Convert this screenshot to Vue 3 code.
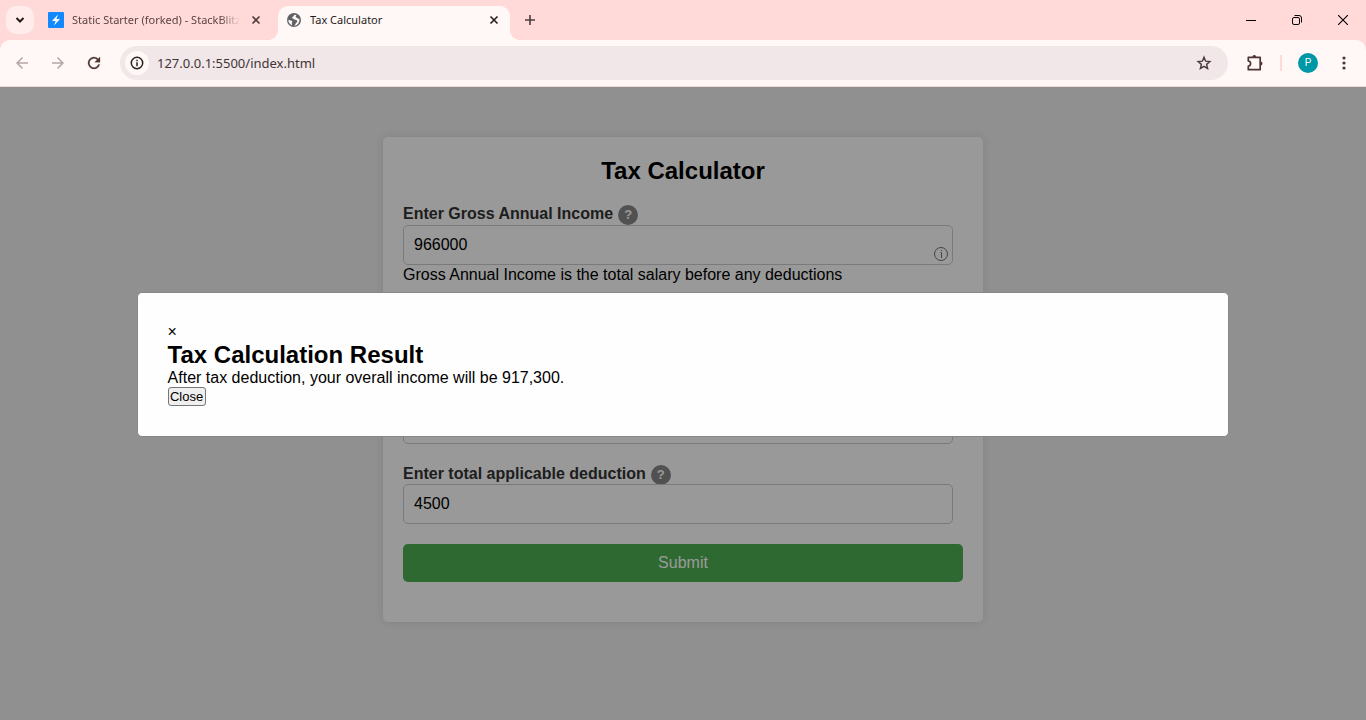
<script setup>
import { ref } from 'vue'

const fields = ref([
  { id: 'gross', label: 'Enter Gross Annual Income', value: '966000', info: true, note: 'Gross Annual Income is the total salary before any deductions' },
  { id: 'second', label: '', value: '' },
  { id: 'third', label: '', value: '' },
  { id: 'deduction', label: 'Enter total applicable deduction', value: '4500' }
])
const address = ref('127.0.0.1:5500/index.html')
const open = ref(true)
</script>

<template>
  <div class="window">
    <header class="chrome">
      <div class="strip">
        <button class="search" aria-label="Search tabs">
          <svg width="12" height="12" viewBox="0 0 12 12"><path d="M2.500 4 6 7.500 9.500 4" fill="none" stroke="#261b1b" stroke-width="2" /></svg>
        </button>
        <div class="tab idle">
          <svg width="16" height="16" viewBox="0 0 16 16"><rect width="16" height="16" rx="1" fill="#1389fd" /><path d="M10 2.500 4 9h3.600l-1.500 4.500L12 7H8.500z" fill="#fff" /></svg>
          <span class="title fade">Static Starter (forked) - StackBlitz</span>
          <button class="x" aria-label="Close tab"><svg width="16" height="16" viewBox="0 0 16 16"><path d="m4.500 4.500 7 7m0-7-7 7" stroke="#4d3c3c" stroke-width="1.600" /></svg></button>
        </div>
        <div class="tab active">
          <svg width="16" height="16" viewBox="0 0 24 24"><circle cx="12" cy="12" r="10.500" fill="#5f6368" /><path d="M13 4c-1.500 1-1 2.200-2.700 3-1.600.7-1.300 2.200 0 2.700 1.700.6 1.700 1.800 3.500 2 2.200.2 3 1 3 2.500 0 1.700-1.600 1.600-2.200 3.200-.5 1.500-1.300 2.500-2.600 3.100A8.500 8.500 0 0 0 20 10c-1.500.5-2.500 0-3.200-1-.6-1-2-.7-2.300-1.900 0-.9.700-1.400 1.300-1.900A8.500 8.500 0 0 0 13 4zM3.600 11.500c2.500 1.200 5 .6 5.700 2.500.5 1.500-.9 2-.5 3.500.2.900.2 1.600 0 2.300a8.700 8.700 0 0 1-5.200-8.300z" fill="#fff8f6" /></svg>
          <span class="title">Tax Calculator</span>
          <button class="x" aria-label="Close tab"><svg width="16" height="16" viewBox="0 0 16 16"><path d="m4.500 4.500 7 7m0-7-7 7" stroke="#261b1b" stroke-width="1.600" /></svg></button>
        </div>
        <button class="plus" aria-label="New tab"><svg width="12" height="12" viewBox="0 0 12 12"><path d="M6 1v10M1 6h10" stroke="#4d3c3c" stroke-width="1.600" /></svg></button>
        <div class="controls">
          <button aria-label="Minimize"><svg width="10" height="10" viewBox="0 0 10 10"><path d="M0 5.500h10" stroke="#000" /></svg></button>
          <button aria-label="Restore"><svg width="10" height="10" viewBox="0 0 10 10" fill="none" stroke="#000"><rect x=".5" y="2.500" width="7" height="7" rx="1.500" /><path d="M2.500.5H7A2.500 2.500 0 0 1 9.500 3v4.500" /></svg></button>
          <button aria-label="Close window"><svg width="10" height="10" viewBox="0 0 10 10"><path d="m0 0 10 10M10 0 0 10" stroke="#000" stroke-width="1.100" /></svg></button>
        </div>
      </div>
      <div class="toolbar">
        <button class="tool" aria-label="Back"><svg width="18" height="18" viewBox="0 0 24 24"><path d="M20 11H7.830l5.590-5.590L12 4l-8 8 8 8 1.410-1.410L7.830 13H20z" fill="#b5a6a5" /></svg></button>
        <button class="tool" aria-label="Forward"><svg width="18" height="18" viewBox="0 0 24 24"><path d="m12 4-1.410 1.410L16.170 11H4v2h12.170l-5.580 5.590L12 20l8-8z" fill="#b5a6a5" /></svg></button>
        <button class="tool" aria-label="Reload"><svg width="18" height="18" viewBox="0 0 24 24"><path d="M17.650 6.350A8 8 0 1 0 19.730 14h-2.080A6 6 0 1 1 16.220 7.780L13 11h7V4z" fill="#4d3534" stroke="#4d3534" stroke-width=".4" /></svg></button>
        <div class="omnibox">
          <button class="site" aria-label="View site information"><svg width="14" height="14" viewBox="0 0 14 14"><circle cx="7" cy="7" r="5.700" fill="none" stroke="#2b1f20" stroke-width="1.500" /><path d="M7 6.200v4M7 3.700v1.500" stroke="#2b1f20" stroke-width="1.500" /></svg></button>
          <input v-model="address" class="address" aria-label="Address" />
          <button class="star" aria-label="Bookmark this tab"><svg width="18" height="18" viewBox="0 0 24 24"><path d="m12 4.300 2.200 5.300 5.600.5-4.300 3.700 1.300 5.500-4.800-2.900-4.800 2.900 1.300-5.500-4.300-3.700 5.600-.5z" fill="none" stroke="#4d3c3c" stroke-width="1.900" /></svg></button>
        </div>
        <button class="tool" aria-label="Extensions"><svg width="18" height="18" viewBox="0 0 18 18"><path d="M2.300 3.300h11.900v12.400H2.300v-3.500c1.500-.2 2.300-1.200 2.300-2.600S3.800 7.200 2.300 7z" fill="none" stroke="#4d3534" stroke-width="1.700" stroke-linejoin="round" /><path d="M6.400 3a1.900 1.900 0 0 1 3.800 0zM14.500 7.500a2 2 0 0 1 0 4z" fill="#4d3534" /></svg></button>
        <span class="divider"></span>
        <button class="tool" aria-label="Profile"><span class="avatar">P</span></button>
        <button class="tool" aria-label="Menu"><svg width="4" height="14" viewBox="0 0 4 14" fill="#4d3534"><circle cx="2" cy="2" r="1.600" /><circle cx="2" cy="7" r="1.600" /><circle cx="2" cy="12" r="1.600" /></svg></button>
      </div>
    </header>

    <main class="page">
      <form class="card" @submit.prevent="open = true">
        <h2>Tax Calculator</h2>
        <div v-for="f in fields" :key="f.id" class="group">
          <div class="caption">
            <label :for="f.id">{{ f.label }}</label>
            <span v-if="f.label" class="help">?</span>
          </div>
          <div class="box">
            <input :id="f.id" v-model="f.value" type="text" />
            <svg v-if="f.info" class="info" width="14" height="14" viewBox="0 0 14 14" fill="none" stroke="#707070"><circle cx="7" cy="7" r="6.500" /><path d="M7.500 3v1M6.500 5.500h1V11" /></svg>
          </div>
          <p v-if="f.note">{{ f.note }}</p>
        </div>
        <button class="submit">Submit</button>
      </form>

      <div v-if="open" class="overlay">
        <section class="modal" role="dialog" aria-labelledby="result">
          <button class="dismiss" aria-label="Close" @click="open = false">×</button>
          <h2 id="result">Tax Calculation Result</h2>
          <p>After tax deduction, your overall income will be 917,300.</p>
          <button class="close" @click="open = false">Close</button>
        </section>
      </div>
    </main>
  </div>
</template>

<style>
body {
  margin: 0;
}
</style>

<style scoped>
* {
  box-sizing: border-box;
  margin: 0;
}
.window {
  display: flex;
  flex-direction: column;
  min-height: 100vh;
  font-family: "Liberation Sans", Arial, sans-serif;
  font-size: 16px;
  line-height: 18px;
}
svg {
  display: block;
  flex: none;
}
.chrome {
  background: #ffdad8;
  font-family: "Noto Sans", "Open Sans", sans-serif;
}
.chrome button {
  display: flex;
  align-items: center;
  justify-content: center;
  flex: none;
  padding: 0;
  border: 0;
  background: none;
}
.strip {
  display: flex;
  align-items: center;
  height: 40px;
  padding-left: 6px;
}
.chrome .search {
  width: 28px;
  height: 28px;
  border-radius: 10px;
  background: #ffeceb;
}
.tab {
  position: relative;
  display: flex;
  align-items: center;
  gap: 8px;
  width: 232px;
  height: 34px;
  margin-top: 6px;
  padding: 0 8px 6px;
}
.idle {
  margin: 6px 6px 0;
  color: #5a4342;
}
.active {
  border-radius: 10px 10px 0 0;
  background: #fff8f6;
  color: #261b1b;
}
.active::before,
.active::after {
  content: "";
  position: absolute;
  bottom: 0;
  width: 10px;
  height: 10px;
}
.active::before {
  right: 100%;
  background: radial-gradient(circle at 0 0, transparent 10px, #fff8f6 10px);
}
.active::after {
  left: 100%;
  background: radial-gradient(circle at 100% 0, transparent 10px, #fff8f6 10px);
}
.title {
  flex: 1;
  overflow: hidden;
  white-space: nowrap;
  font-size: 11px;
  line-height: 20px;
}
.fade {
  mask-image: linear-gradient(to right, #000 148px, transparent 168px);
}
.x {
  width: 16px;
  height: 16px;
}
.plus {
  width: 40px;
  height: 28px;
}
.controls {
  display: flex;
  margin-left: auto;
}
.controls button {
  width: 46px;
  height: 40px;
}
.toolbar {
  display: flex;
  align-items: center;
  height: 47px;
  padding: 0 4px;
  border-bottom: 1px solid #f0d8d6;
  border-radius: 10px 10px 0 0;
  background: #fff8f6;
}
.tool {
  width: 36px;
  height: 34px;
}
.omnibox {
  display: flex;
  flex: 1;
  align-items: center;
  height: 34px;
  margin: 0 9px 0 8px;
  padding: 0 15px 0 5px;
  border-radius: 17px;
  background: #f1e6e8;
}
.chrome .site {
  width: 24px;
  height: 24px;
  border-radius: 50%;
  background: #fff8f6;
}
.address {
  flex: 1;
  min-width: 0;
  padding: 0 8px;
  border: 0;
  outline: 0;
  background: none;
  color: #3f3536;
  font-family: inherit;
  font-size: 13px;
}
.star {
  width: 18px;
  height: 24px;
}
.divider {
  width: 2px;
  height: 16px;
  margin: 0 8px 0 7px;
  background: #ffdad8;
}
.avatar {
  width: 20px;
  border-radius: 50%;
  background: #0097a7;
  color: #fff;
  font-size: 10px;
  line-height: 20px;
}
.page {
  position: relative;
  flex: 1;
  padding: 50px 20px;
  background: #f0f0f0;
}
h2 {
  font-size: 24px;
  line-height: 27px;
}
p {
  line-height: 19px;
}
.card {
  max-width: 600px;
  margin: 0 auto;
  padding: 20px 20px 40px;
  border-radius: 5px;
  background: #fff;
  box-shadow: 0 0 10px rgba(0, 0, 0, 0.1);
}
.card h2 {
  margin-bottom: 20px;
  text-align: center;
}
.group {
  margin-bottom: 20px;
}
.caption {
  display: flex;
  gap: 5px;
  height: 20px;
}
.group:first-of-type .caption {
  height: 21px;
}
label {
  color: #333;
  font-weight: bold;
  line-height: 20px;
}
.help {
  width: 20px;
  height: 20px;
  margin-top: 1px;
  border-radius: 50%;
  background: #888;
  color: #fff;
  font-size: 13px;
  font-weight: bold;
  line-height: 20px;
  text-align: center;
}
.box {
  position: relative;
  margin-right: 10px;
}
.box input {
  display: block;
  width: 100%;
  height: 40px;
  padding: 10px;
  border: 1px solid #ccc;
  border-radius: 5px;
  background: #fff;
  color: #000;
  font-family: inherit;
  font-size: 16px;
}
.info {
  position: absolute;
  right: 5px;
  bottom: 4px;
}
.submit {
  display: block;
  width: 100%;
  height: 38px;
  border: 0;
  border-radius: 5px;
  background: #4caf50;
  color: #fff;
  font-family: inherit;
  font-size: 16px;
}
.overlay {
  position: absolute;
  inset: 0;
  background: rgba(0, 0, 0, 0.4);
}
.modal {
  width: 80%;
  margin: 15% auto;
  padding: 30px;
  border: 1px solid #888;
  border-radius: 5px;
  background: #fefefe;
}
.dismiss {
  display: block;
  padding: 0;
  border: 0;
  background: none;
  color: #000;
  font-family: inherit;
  font-size: 16px;
  line-height: 18px;
}
.close {
  display: block;
  min-width: 38px;
  padding: 1px;
  border: 1px solid #767676;
  border-radius: 3px;
  background: #efefef;
  color: #000;
  font-family: inherit;
  font-size: 13px;
  line-height: 15px;
}
</style>
